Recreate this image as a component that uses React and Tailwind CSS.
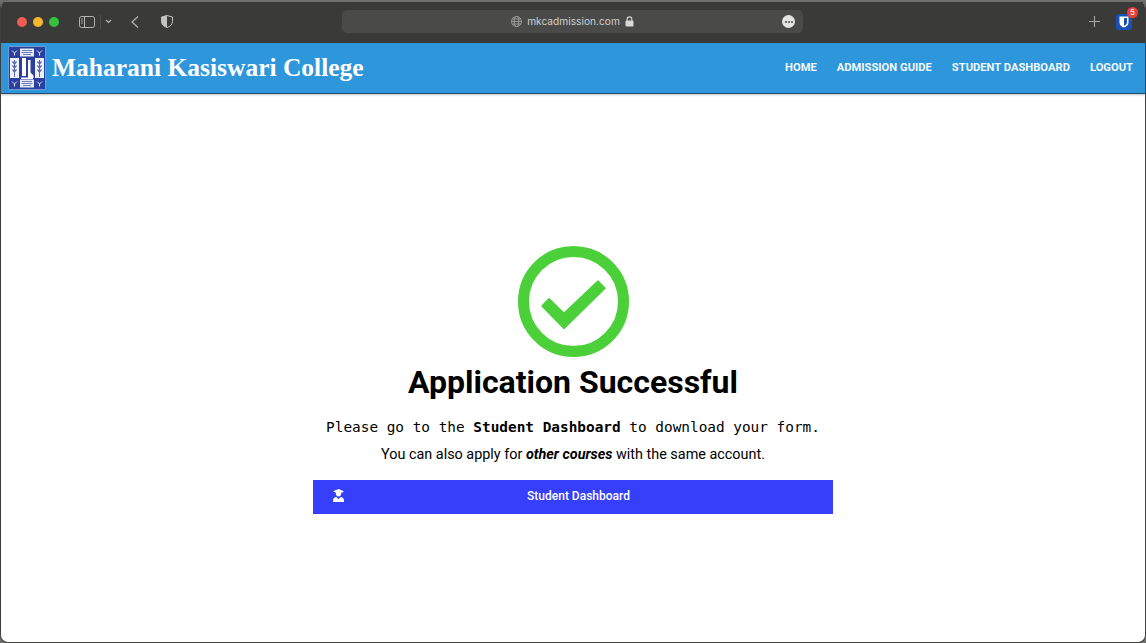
function Logo() {
  return (
    <svg width="38" height="44" viewBox="0 0 38 44" className="shrink-0">
      <rect x="0" y="0" width="38" height="44" rx="2" fill="#6f9ad4" />
      <rect x="1" y="1" width="36" height="42" fill="#2b3f9e" />
      <rect x="12" y="2.500" width="14" height="8" fill="#e6e9f5" />
      <rect x="12" y="33.500" width="14" height="8" fill="#e6e9f5" />
      <path d="M4 4.500l2.500 2.500L9 4.500M6.500 7v2.500M29 4.500l2.500 2.500L34 4.500M31.500 7v2.500" stroke="#dfe4f3" strokeWidth="1" fill="none" />
      <path d="M4 35.500l2.500 2.500L9 35.500M6.500 38v2.500M29 35.500l2.500 2.500L34 35.500M31.500 38v2.500" stroke="#dfe4f3" strokeWidth="1" fill="none" />
      <path d="M14 4.500h10M13.500 6.500h11M15 8.500h8M14 35.500h10M13.500 37.500h11M15 39.500h8" stroke="#6f7dbd" strokeWidth="1" />
      <rect x="2" y="12" width="9" height="20" fill="#eef0f8" />
      <rect x="27" y="12" width="9" height="20" fill="#eef0f8" />
      <path d="M6.500 14v17M31.500 14v17" stroke="#5a6aaa" strokeWidth="1" />
      <path d="M4.500 15.500l2 2.500 2-2.500M4.500 19.500l2 2.500 2-2.500M4.500 23.500l2 2.500 2-2.500M29.500 15.500l2 2.500 2-2.500M29.500 19.500l2 2.500 2-2.500M29.500 23.500l2 2.500 2-2.500" stroke="#5a6aaa" strokeWidth="1.300" fill="none" />
      <path d="M14 12h4v18h-4zM20 14h2.500v12.500l3 3V32H20z" fill="#fff" />
      <path d="M13 31.500h12v1.500H13z" fill="#fff" />
    </svg>
  );
}

function CapIcon() {
  return (
    <svg width="11" height="13" viewBox="0 0 12 13" fill="#fff" preserveAspectRatio="none" className="shrink-0">
      <path d="M6 0L12 2.200 10.600 2.800V4H10V3L9 3.400V4.500C9 6.200 7.700 7.400 6 7.400S3 6.200 3 4.500V3.400L0 2.200Z" />
      <path d="M3.700 8L6 10.200 8.300 8C10.400 8.200 12 9.500 12 11.200V13H0V11.200C0 9.500 1.600 8.200 3.700 8Z" />
    </svg>
  );
}

function BrowserBar() {
  return (
    <div className="relative flex h-[43px] shrink-0 items-center bg-[#3a3a39] border-t-2 border-[#6f6f6e] pb-[2px] pl-[16px] pr-[13px]">
      <div className="flex gap-[6px]">
        <span className="h-[10px] w-[10px] rounded-full bg-[#ee5c54]" />
        <span className="h-[10px] w-[10px] rounded-full bg-[#f5b82e]" />
        <span className="h-[10px] w-[10px] rounded-full bg-[#35c03f]" />
      </div>
      <svg width="16" height="12" viewBox="0 0 16 12" fill="none" stroke="#b5b5b4" strokeWidth="1" className="ml-[20px]">
        <rect x="0.500" y="0.500" width="15" height="11" rx="2" />
        <path d="M5.500 1v10" />
        <path d="M2 3h2M2 5h2M2 7h2" strokeWidth="0.800" />
      </svg>
      <span className="ml-[5px] h-[14px] w-px bg-[#4e4e4d]" />
      <svg width="7" height="5" viewBox="0 0 7 5" fill="none" stroke="#b5b5b4" strokeWidth="1.200" className="ml-[4px]">
        <path d="M1 1l2.500 2.500L6 1" />
      </svg>
      <svg width="8" height="12" viewBox="0 0 8 12" fill="none" stroke="#b5b5b4" strokeWidth="1.200" className="ml-[19px]">
        <path d="M7 0.500L1 6l6 5.500" />
      </svg>
      <svg width="12" height="13" viewBox="0 0 12 13" className="ml-[22px]">
        <path d="M6 0.500L11.500 2V6.500C11.500 9.500 9 11.600 6 12.500 3 11.600 0.500 9.500 0.500 6.500V2Z" fill="none" stroke="#c2c2c1" strokeWidth="1" />
        <path d="M6 0.500V12.500C3 11.600 0.500 9.500 0.500 6.500V2Z" fill="#c2c2c1" />
      </svg>
      <div className="ml-[169px] flex h-[23px] w-[461px] items-center rounded-[5px] bg-[#4a4a49] pr-[8px]">
        <div className="flex flex-1 items-center justify-center gap-[5px] pl-[21px] font-['Inter',sans-serif] text-[10.200px] text-[#d0d0cf]">
          <svg width="11" height="11" viewBox="0 0 11 11" fill="none" stroke="#a8a8a7" strokeWidth="0.800">
            <circle cx="5.500" cy="5.500" r="5" />
            <ellipse cx="5.500" cy="5.500" rx="2.300" ry="5" />
            <path d="M0.500 5.500h10M1.200 3h8.600M1.200 8h8.600" />
          </svg>
          <span>mkcadmission.com</span>
          <svg width="9" height="11" viewBox="0 0 9 11">
            <path d="M2.200 5V3.200a2.300 2.300 0 0 1 4.600 0V5" fill="none" stroke="#d8d8d7" strokeWidth="1.100" />
            <rect x="0.500" y="4.500" width="8" height="6" rx="1" fill="#d8d8d7" />
          </svg>
        </div>
        <span className="flex h-[13px] w-[13px] items-center justify-center gap-[1px] rounded-full bg-[#e4e4e3]">
          <span className="h-[2px] w-[2px] rounded-full bg-[#4a4a49]" />
          <span className="h-[2px] w-[2px] rounded-full bg-[#4a4a49]" />
          <span className="h-[2px] w-[2px] rounded-full bg-[#4a4a49]" />
        </span>
      </div>
      <div className="ml-auto flex items-center gap-[16px]">
        <svg width="11" height="11" viewBox="0 0 11 11" stroke="#a8a8a7" strokeWidth="1.100">
          <path d="M5.500 0v11M0 5.500h11" />
        </svg>
        <div className="relative">
          <div className="flex h-[16px] w-[16px] items-center justify-center rounded-[3px] bg-[#1a4fb5]">
            <svg width="10" height="12" viewBox="0 0 10 12">
              <path d="M0.500 0.500h9V6.500C9.500 9 7.500 10.700 5 11.500 2.500 10.700 0.500 9 0.500 6.500Z" fill="#fff" />
              <path d="M5 2h3V6.500C8 8 6.700 9.200 5 9.800Z" fill="#1a4fb5" />
            </svg>
          </div>
          <span className="absolute right-[-6px] top-[-7px] flex h-[11px] w-[11px] items-center justify-center rounded-full bg-[#e5403a] font-['Inter',sans-serif] text-[8px] leading-none text-white">
            5
          </span>
        </div>
      </div>
    </div>
  );
}

export default function App() {
  return (
    <div className="h-[643px] w-[1146px] overflow-hidden bg-[#6f6f6e] font-['Roboto',sans-serif]">
      <div className="flex h-full flex-col overflow-hidden rounded-[8px] border-x border-b border-[#3f3f3e] bg-white">
        <BrowserBar />
        <header className="flex h-[51px] shrink-0 items-center border-b border-[#1f4f70] bg-[#2e96db] pb-[1px] pl-[7px] pr-[12px] shadow-[0_1px_2px_rgba(0,0,0,0.25)]">
          <Logo />
          <a href="#" className="ml-[6px] font-['Liberation_Serif',serif] text-[25.500px] font-bold leading-none text-white">
            Maharani Kasiswari College
          </a>
          <nav className="ml-auto flex gap-[20px] pt-[2px] text-[11.200px] font-bold text-[#f2f8fd]">
            <a href="#">HOME</a>
            <a href="#">ADMISSION GUIDE</a>
            <a href="#">STUDENT DASHBOARD</a>
            <a href="#">LOGOUT</a>
          </nav>
        </header>
        <main className="flex flex-1 flex-col items-center pt-[152px] text-black">
          <svg width="111" height="111" viewBox="0 0 111 111" fill="none" className="shrink-0">
            <circle cx="55.500" cy="55.500" r="50" stroke="#4bd03a" strokeWidth="11" />
            <path d="M24 60L31 52.700 46 67.300 80 35 87 42.300 46 82.500Z" fill="#4bd03a" stroke="#4bd03a" strokeWidth="1.500" strokeLinejoin="round" />
          </svg>
          <h1 className="mt-[6px] text-[32px] font-bold leading-[38px]">Application Successful</h1>
          <p className="mt-[16px] font-['DejaVu_Sans_Mono',monospace] text-[14.400px] leading-[20px]">
            Please go to the <b>Student Dashboard</b> to download your form.
          </p>
          <p className="mt-[8px] text-[14.400px] leading-[20px]">
            You can also apply for <b><i>other courses</i></b> with the same account.
          </p>
          <button className="mt-[15px] flex h-[34px] w-[520px] items-center bg-[#3640fb] pb-[3px] pl-[20px] text-[12px] font-medium text-white">
            <CapIcon />
            <span className="flex-1 pr-[20px] text-center">Student Dashboard</span>
          </button>
        </main>
      </div>
    </div>
  );
}
